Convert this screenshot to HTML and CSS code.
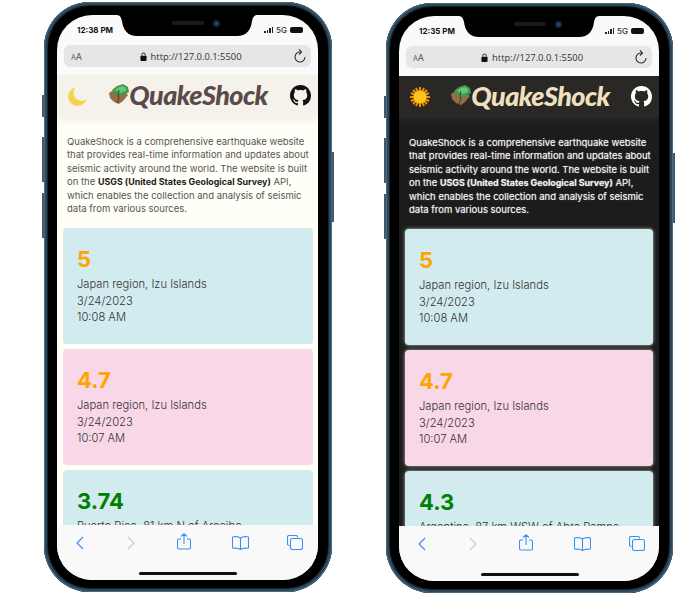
FILE: index.html
```html
<!DOCTYPE html>
<html lang="en">
<head>
  <meta charset="UTF-8">
  <meta name="viewport" content="width=device-width, initial-scale=1.0">
  <title>QuakeShock</title>
  <link rel="stylesheet" href="styles.css">
</head>
<body>
  <svg class="defs" width="0" height="0">
    <symbol id="island" viewBox="0 0 20 20">
      <path d="M0 9l3-2 14 2 2 2-5 6-4 3-5-2-4-4z" fill="#9a6b45"/>
      <path d="M3 6l5-4 6-2 5 3 1 5-5 3-6 2-4-4z" fill="#3f9a4c"/>
      <path d="M6 6l4-3 4-1 3 2 0 3-6 2z" fill="#6cc47a"/>
      <path d="M10 6l-1 5 1 3-2 5" fill="none" stroke="#4a3a30" stroke-width="1"/>
    </symbol>
    <symbol id="github" viewBox="0 0 16 16">
      <path d="M8 0C3.58 0 0 3.58 0 8c0 3.54 2.29 6.53 5.47 7.59.4.07.55-.17.55-.38 0-.19-.01-.82-.01-1.49-2.01.37-2.53-.49-2.69-.94-.09-.23-.48-.94-.82-1.13-.28-.15-.68-.52-.01-.53.63-.01 1.08.58 1.23.82.72 1.21 1.87.87 2.33.66.07-.52.28-.87.51-1.07-1.78-.2-3.64-.89-3.64-3.95 0-.87.31-1.59.82-2.15-.08-.2-.36-1.02.08-2.12 0 0 .67-.21 2.2.82.64-.18 1.32-.27 2-.27.68 0 1.36.09 2 .27 1.53-1.04 2.2-.82 2.2-.82.44 1.1.16 1.92.08 2.12.51.56.82 1.27.82 2.15 0 3.07-1.87 3.75-3.65 3.95.29.25.54.73.54 1.48 0 1.07-.01 1.93-.01 2.2 0 .21.15.46.55.38A8.013 8.013 0 0016 8c0-4.42-3.58-8-8-8z" fill="currentColor"/>
    </symbol>
    <symbol id="back" viewBox="0 0 8 14"><path d="M7 1L1 7l6 6" fill="none" stroke="currentColor" stroke-width="1.2"/></symbol>
    <symbol id="forward" viewBox="0 0 8 14"><path d="M1 1l6 6-6 6" fill="none" stroke="currentColor" stroke-width="1.2"/></symbol>
    <symbol id="share" viewBox="0 0 14 17">
      <path d="M4 6H2a1.500 1.500 0 00-1.500 1.500v7A1.500 1.500 0 002 16h10a1.500 1.500 0 001.500-1.500v-7A1.500 1.500 0 0012 6h-2M7 11V1M4 3.500L7 .8l3 2.700" fill="none" stroke="currentColor" stroke-width="1.1"/>
    </symbol>
    <symbol id="book" viewBox="0 0 17 14">
      <path d="M8.500 2C7 .8 4 .4 1.200 .8c-.4 0-.7.3-.7.7v10c0 .4.300.7.700.7 3-.3 5.800 0 7.300 1.300 1.500-1.300 4.300-1.600 7.300-1.300.4 0 .7-.3.7-.7v-10c0-.4-.3-.7-.7-.7C13 .4 10 .8 8.500 2zM8.500 2v11" fill="none" stroke="currentColor" stroke-width="1.1"/>
    </symbol>
    <symbol id="tabs" viewBox="0 0 16 15">
      <path d="M2.500 10.500H2A1.500 1.500 0 01.5 9V2A1.500 1.500 0 012 .5h7A1.500 1.500 0 0110.500 2v.5" fill="none" stroke="currentColor" stroke-width="1.1"/>
      <rect x="3.500" y="3.500" width="12" height="11" rx="2" fill="none" stroke="currentColor" stroke-width="1.1"/>
    </symbol>
    <symbol id="reload" viewBox="0 0 14 14">
      <path d="M7.500 3A5 5 0 1012 8M6 .3L8.500 3 6 5.500" fill="none" stroke="currentColor" stroke-width="1.1"/>
    </symbol>
    <symbol id="lock" viewBox="0 0 8 10">
      <path d="M2 4V3a2 2 0 014 0v1" fill="none" stroke="currentColor" stroke-width="1"/>
      <rect x="0.500" y="4" width="7" height="6" rx="1" fill="currentColor"/>
    </symbol>
    <symbol id="notch" viewBox="0 0 142 22">
      <path d="M0 0c4 0 5 2 6 6 1 9 6 15 15 15h100c9 0 14-6 15-15 1-4 2-6 6-6z" fill="#000"/>
    </symbol>
  </svg>

  <main class="stage">
    <section class="phone">
      <span class="btn btn-silent"></span><span class="btn btn-up"></span><span class="btn btn-down"></span><span class="btn btn-power"></span>
      <div class="screen">
        <div class="notch">
          <svg class="notch-shape"><use href="#notch"/></svg>
          <span class="speaker"></span><span class="camera"></span>
        </div>
        <div class="status">
          <span class="time">12:38 PM</span>
          <span class="signal"><i class="bars"><b></b><b></b><b></b><b></b></i>5G<i class="battery"></i></span>
        </div>
        <div class="urlbar">
          <span class="aa"><small>A</small>A</span>
          <span class="url"><svg class="lock"><use href="#lock"/></svg>http://127.0.0.1:5500</span>
          <svg class="reload"><use href="#reload"/></svg>
        </div>
        <div class="page">
          <header class="site-head">
            <svg class="moon" viewBox="0 0 20 22"><path d="M8 1.200A10 10 0 1 0 19.600 14A8.700 8.700 0 0 1 8 1.200z" fill="#f6d24e"/></svg>
            <h1 class="logo"><svg class="island"><use href="#island"/></svg>QuakeShock</h1>
            <svg class="gh"><use href="#github"/></svg>
          </header>
          <p class="intro">QuakeShock is a comprehensive earthquake website that provides real-time information and updates about seismic activity around the world. The website is built on the <strong>USGS (United States Geological Survey)</strong> API, which enables the collection and analysis of seismic data from various sources.</p>
          <div class="cards">
            <article class="card blue"><div class="mag orange">5</div><p>Japan region, Izu Islands</p><p>3/24/2023</p><p>10:08 AM</p></article>
            <article class="card pink"><div class="mag orange">4.7</div><p>Japan region, Izu Islands</p><p>3/24/2023</p><p>10:07 AM</p></article>
            <article class="card blue"><div class="mag green">3.74</div><p>Puerto Rico, 81 km N of Arecibo</p></article>
          </div>
        </div>
        <nav class="toolbar">
          <svg class="back"><use href="#back"/></svg>
          <svg class="forward"><use href="#forward"/></svg>
          <svg class="share"><use href="#share"/></svg>
          <svg class="book"><use href="#book"/></svg>
          <svg class="tabs"><use href="#tabs"/></svg>
          <span class="home-bar"></span>
        </nav>
      </div>
    </section>

    <section class="phone dark">
      <span class="btn btn-silent"></span><span class="btn btn-up"></span><span class="btn btn-down"></span><span class="btn btn-power"></span>
      <div class="screen">
        <div class="notch">
          <svg class="notch-shape"><use href="#notch"/></svg>
          <span class="speaker"></span><span class="camera"></span>
        </div>
        <div class="status">
          <span class="time">12:35 PM</span>
          <span class="signal"><i class="bars"><b></b><b></b><b></b><b></b></i>5G<i class="battery"></i></span>
        </div>
        <div class="urlbar">
          <span class="aa"><small>A</small>A</span>
          <span class="url"><svg class="lock"><use href="#lock"/></svg>http://127.0.0.1:5500</span>
          <svg class="reload"><use href="#reload"/></svg>
        </div>
        <div class="page">
          <header class="site-head">
            <svg class="sun" viewBox="0 0 20 20">
              <path d="M10 0v20M0 10h20M3 3l14 14M17 3L3 17M6 1l8 18M14 1L6 19M1 6l18 8M19 6L1 14" stroke="#f08c00" stroke-width="2"/>
              <circle cx="10" cy="10" r="6.500" fill="#fdc21e"/>
            </svg>
            <h1 class="logo"><svg class="island"><use href="#island"/></svg>QuakeShock</h1>
            <svg class="gh"><use href="#github"/></svg>
          </header>
          <p class="intro">QuakeShock is a comprehensive earthquake website that provides real-time information and updates about seismic activity around the world. The website is built on the <strong>USGS (United States Geological Survey)</strong> API, which enables the collection and analysis of seismic data from various sources.</p>
          <div class="cards">
            <article class="card blue"><div class="mag orange">5</div><p>Japan region, Izu Islands</p><p>3/24/2023</p><p>10:08 AM</p></article>
            <article class="card pink"><div class="mag orange">4.7</div><p>Japan region, Izu Islands</p><p>3/24/2023</p><p>10:07 AM</p></article>
            <article class="card blue"><div class="mag green">4.3</div><p>Argentina, 87 km WSW of Abra Pampa</p></article>
          </div>
        </div>
        <nav class="toolbar">
          <svg class="back"><use href="#back"/></svg>
          <svg class="forward"><use href="#forward"/></svg>
          <svg class="share"><use href="#share"/></svg>
          <svg class="book"><use href="#book"/></svg>
          <svg class="tabs"><use href="#tabs"/></svg>
          <span class="home-bar"></span>
        </nav>
      </div>
    </section>
  </main>
</body>
</html>
```

FILE: styles.css
```css
html, body {
  margin: 0;
  height: 100%;
  background-color: #fff;
  overflow: hidden;
}

body {
  font-family: "Inter", "Liberation Sans", sans-serif;
  color: #333;
}

.defs {
  position: absolute;
}

.stage {
  display: flex;
  gap: 54px;
  padding: 2px 0 0 44px;
}

/* phone shell */
.phone {
  position: relative;
  box-sizing: border-box;
  width: 288px;
  height: 590px;
  padding: 13px 14px 12px 13px;
  background-color: #000;
  border-radius: 46px;
  box-shadow: inset 0 0 0 1px #4a6b80, inset 0 0 0 3px #2c4658, inset 0 0 0 4px #16242e;
}

.phone.dark {
  width: 287px;
  margin-top: 1px;
}

.btn {
  position: absolute;
  width: 2px;
  background-color: #3d5a70;
}

.btn-silent { left: -2px; top: 93px; height: 22px; }
.btn-up { left: -2px; top: 135px; height: 45px; }
.btn-down { left: -2px; top: 191px; height: 45px; }
.btn-power { right: -2px; top: 150px; height: 70px; }

.screen {
  position: relative;
  display: flex;
  flex-direction: column;
  height: 100%;
  overflow: hidden;
  background-color: #fafafa;
  border-radius: 35px;
}

.notch {
  position: absolute;
  top: 0;
  left: 59px;
  width: 142px;
  height: 22px;
}

.notch-shape {
  display: block;
  width: 142px;
  height: 22px;
}

.speaker {
  position: absolute;
  top: 6px;
  left: 56px;
  width: 32px;
  height: 4px;
  border-radius: 2px;
  background-color: #1b1b1d;
}

.camera {
  position: absolute;
  top: 5px;
  left: 97px;
  width: 7px;
  height: 7px;
  border-radius: 50%;
  background: radial-gradient(circle, #2a4a8a 0, #141c30 70%);
}

/* browser chrome */
.status {
  display: flex;
  justify-content: space-between;
  align-items: center;
  height: 30px;
  padding: 0 15px 0 20px;
  flex: none;
  font-size: 8px;
  font-weight: 700;
  color: #111;
}

.signal {
  display: flex;
  align-items: center;
  gap: 3px;
  font-weight: 500;
  font-size: 8px;
  color: #333;
}

.bars {
  display: flex;
  align-items: flex-end;
  gap: 1px;
  height: 6px;
}

.bars b {
  width: 1.5px;
  background-color: #222;
}

.bars b:nth-child(1) { height: 2px; }
.bars b:nth-child(2) { height: 3px; }
.bars b:nth-child(3) { height: 5px; }
.bars b:nth-child(4) { height: 6px; }

.battery {
  width: 13px;
  height: 6px;
  border-radius: 2px;
  background-color: #111;
}

.urlbar {
  display: flex;
  align-items: center;
  justify-content: space-between;
  flex: none;
  height: 22px;
  margin: 0 7px 8px;
  padding: 0 4px 0 7px;
  background-color: #e6e6e6;
  border-radius: 6px;
  font-size: 9px;
  color: #444;
}

.aa {
  font-size: 9px;
  color: #555;
}

.aa small {
  font-size: 7px;
}

.url {
  display: flex;
  align-items: center;
  gap: 4px;
  margin-left: 6px;
  font-family: "Open Sans", sans-serif;
  font-size: 9.4px;
  color: #333;
}

.lock {
  width: 7px;
  height: 9px;
  color: #111;
}

.reload {
  width: 14px;
  height: 14px;
  color: #333;
}

/* page */
.page {
  flex: 1;
  min-height: 0;
  overflow: hidden;
  background-color: #fffff8;
}

.site-head {
  display: flex;
  align-items: center;
  justify-content: space-between;
  height: 42px;
  padding: 0 7px 0 11px;
  background-color: #f5f2eb;
  box-shadow: 0 3px 8px rgba(0, 0, 0, 0.08);
}

.moon {
  width: 19px;
  height: 21px;
}

.sun {
  width: 20px;
  height: 20px;
}

.logo {
  display: flex;
  align-items: center;
  margin: 0 0 4px;
  font-family: "Lato", sans-serif;
  font-size: 27px;
  font-style: italic;
  font-weight: 900;
  letter-spacing: -0.6px;
  color: #5a4a4a;
}

.island {
  width: 20px;
  height: 20px;
}

.gh {
  width: 21px;
  height: 21px;
  margin-bottom: 2px;
  color: #111;
}

.intro {
  margin: 0;
  padding: 18px 8px 13px 10px;
  font-family: "Inter", sans-serif;
  font-size: 9.5px;
  line-height: 13.4px;
  color: #555;
}

.intro strong {
  font-size: 8.9px;
  color: #222;
}

.cards {
  display: flex;
  flex-direction: column;
  gap: 5px;
  margin: 0 5px 0 6px;
}

.card {
  box-sizing: border-box;
  height: 116px;
  padding: 17px 14px;
  border-radius: 4px;
}

.card p {
  margin: 0;
  font-family: "Inter", sans-serif;
  font-size: 11.2px;
  font-weight: 300;
  line-height: 16.5px;
  color: #333;
}

.blue { background-color: #d1ebee; }
.pink { background-color: #f8d8e8; }

.mag {
  font-size: 22px;
  font-weight: 700;
  line-height: 28px;
  margin-bottom: 3px;
}

.orange { color: #ffa500; }
.green { color: #008000; }

.toolbar {
  position: relative;
  display: flex;
  align-items: flex-end;
  flex: none;
  height: 55px;
  padding: 0 0 30px 19px;
  box-sizing: border-box;
  background-color: #f9f9f9;
  color: #3d8ef5;
}

.back, .forward { width: 8px; height: 14px; }
.share { width: 14px; height: 17px; margin-left: 42px; }
.book { width: 17px; height: 14px; margin-left: 41px; }
.tabs { width: 16px; height: 15px; margin-left: 38px; }
.forward { margin-left: 43px; color: #ccc; }

.home-bar {
  position: absolute;
  left: 82px;
  bottom: 5px;
  width: 98px;
  height: 3px;
  border-radius: 2px;
  background-color: #111;
}

/* dark theme */
.dark .page {
  background-color: #1c1c1c;
}

.dark .site-head {
  background-color: #2a2825;
  box-shadow: 0 3px 10px rgba(60, 60, 60, 0.4);
}

.dark .logo {
  color: #f0e0c0;
}

.dark .gh {
  color: #fff;
}

.dark .intro {
  color: #f2f2f2;
  text-shadow: 0 0 1px rgba(255, 255, 255, 0.6);
}

.dark .intro strong {
  color: #eee;
}

.dark .card {
  box-shadow: 0 0 3px 1px rgba(255, 255, 255, 0.4);
}

.dark .cards {
  margin-right: 6px;
}
```
